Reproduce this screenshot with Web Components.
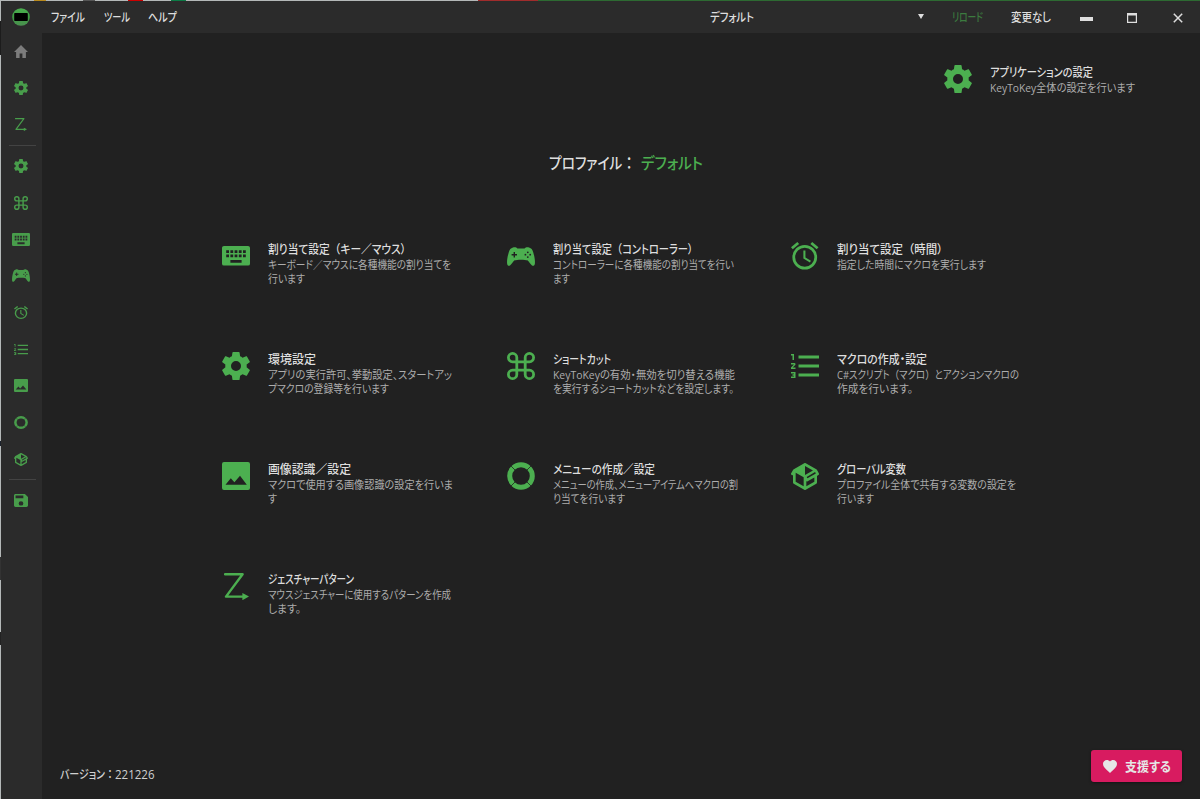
<!DOCTYPE html>
<html lang="ja">
<head>
<meta charset="utf-8">
<title>KeyToKey</title>
<style>
  html, body {
    margin: 0;
    height: 100%;
    overflow: hidden;
    background: #212121;
    color: #dedede;
    font-family: "Open Sans", "Noto Sans CJK JP", sans-serif;
    font-size: 12px;
  }
</style>
</head>
<body>
<app-window></app-window>

<script>
(function () {
  // [viewBox, svg content]
  const ICONS = {
    home: ['2 3 20 17', '<path d="M10,20V14H14V20H19V12H22L12,3L2,12H5V20H10Z"/>'],
    cog: ['2.2 2 19.6 20', '<path d="M12,15.5A3.5,3.5 0 0,1 8.5,12A3.5,3.5 0 0,1 12,8.5A3.5,3.5 0 0,1 15.5,12A3.5,3.5 0 0,1 12,15.5M19.43,12.97C19.47,12.65 19.5,12.33 19.5,12C19.5,11.67 19.47,11.34 19.43,11L21.54,9.37C21.73,9.22 21.78,8.95 21.66,8.73L19.66,5.27C19.54,5.05 19.27,4.96 19.05,5.05L16.56,6.05C16.04,5.66 15.5,5.32 14.87,5.07L14.5,2.42C14.46,2.18 14.25,2 14,2H10C9.75,2 9.54,2.18 9.5,2.42L9.13,5.07C8.5,5.32 7.96,5.66 7.44,6.05L4.95,5.05C4.73,4.96 4.46,5.05 4.34,5.27L2.34,8.73C2.21,8.95 2.27,9.22 2.46,9.37L4.57,11C4.53,11.34 4.5,11.67 4.5,12C4.5,12.33 4.53,12.65 4.57,12.97L2.46,14.63C2.27,14.78 2.21,15.05 2.34,15.27L4.34,18.73C4.46,18.95 4.73,19.03 4.95,18.95L7.44,17.94C7.96,18.34 8.5,18.68 9.13,18.93L9.5,21.58C9.54,21.82 9.75,22 10,22H14C14.25,22 14.46,21.82 14.5,21.58L14.87,18.93C15.5,18.67 16.04,18.34 16.56,17.94L19.05,18.95C19.27,19.03 19.54,18.95 19.66,18.73L21.66,15.27C21.78,15.05 21.73,14.78 21.54,14.63L19.43,12.97Z"/>'],
    gesture: ['0 0 25 27', '<path d="M1,1.2H18.6L2,23.6H20" fill="none" stroke="currentColor" stroke-width="2.4" stroke-linejoin="round" stroke-linecap="round"/><path d="M18.4,20L25,23.6L18.4,27.2Z"/>'],
    command: ['2 2 20 20', '<path d="M6,2A4,4 0 0,1 10,6V8H14V6A4,4 0 0,1 18,2A4,4 0 0,1 22,6A4,4 0 0,1 18,10H16V14H18A4,4 0 0,1 22,18A4,4 0 0,1 18,22A4,4 0 0,1 14,18V16H10V18A4,4 0 0,1 6,22A4,4 0 0,1 2,18A4,4 0 0,1 6,14H8V10H6A4,4 0 0,1 2,6A4,4 0 0,1 6,2M16,18A2,2 0 0,0 18,20A2,2 0 0,0 20,18A2,2 0 0,0 18,16H16V18M14,10H10V14H14V10M6,16A2,2 0 0,0 4,18A2,2 0 0,0 6,20A2,2 0 0,0 8,18V16H6M8,6A2,2 0 0,0 6,4A2,2 0 0,0 4,6A2,2 0 0,0 6,8H8V6M18,8A2,2 0 0,0 20,6A2,2 0 0,0 18,4A2,2 0 0,0 16,6V8H18Z"/>'],
    keyboard: ['2 5 20 14', '<path d="M19,10H17V8H19M19,13H17V11H19M16,10H14V8H16M16,13H14V11H16M16,17H8V15H16M7,10H5V8H7M7,13H5V11H7M8,11H10V13H8M8,8H10V10H8M11,11H13V13H11M11,8H13V10H11M20.6,5H3.4C2.6,5 2,5.6 2,6.4V17.6A1.4,1.4 0 0,0 3.4,19H20.6A1.4,1.4 0 0,0 22,17.6V6.4C22,5.6 21.4,5 20.6,5Z"/>'],
    controller: ['0 0 28 19', '<path fill-rule="evenodd" d="M6,0.6C7.8,0 9.6,0.5 10.4,1.6H17.6C18.4,0.5 20.2,0 22,0.6C24.4,1.3 25.4,2.6 26.2,5.2C27.4,9 28.2,13.4 27.9,16.4C27.7,18.4 26.4,19.2 25,18.4C23.3,17.4 22.3,14.6 20.4,13.3C18.4,12.4 9.6,12.4 7.6,13.3C5.7,14.6 4.7,17.4 3,18.4C1.6,19.2 0.3,18.4 0.1,16.4C-0.2,13.4 0.6,9 1.8,5.2C2.6,2.6 3.6,1.3 6,0.6M6.6,5V7H4.6V8.4H6.6V10.4H8V8.4H10V7H8V5Z"/><g fill="var(--back, #212121)"><circle cx="20.8" cy="5.3" r=".9"/><circle cx="20.8" cy="10.1" r=".9"/><circle cx="18.4" cy="7.7" r=".9"/><circle cx="23.2" cy="7.7" r=".9"/></g>'],
    alarm: ['2 1.86 20 20.14', '<path d="M12,20A7,7 0 0,1 5,13A7,7 0 0,1 12,6A7,7 0 0,1 19,13A7,7 0 0,1 12,20M12,4A9,9 0 0,0 3,13A9,9 0 0,0 12,22A9,9 0 0,0 21,13A9,9 0 0,0 12,4M12.5,8H11V14L15.75,16.85L16.5,15.62L12.5,13.25V8M7.88,3.39L6.6,1.86L2,5.71L3.29,7.24L7.88,3.39M22,5.72L17.4,1.86L16.11,3.39L20.71,7.25L22,5.72Z"/>'],
    list: ['2 4 19 16', '<path d="M7,13V11H21V13H7M7,19V17H21V19H7M7,7V5H21V7H7M3,8V5H2V4H4V8H3M2,17V16H5V20H2V19H4V18.5H3V17.5H4V17H2M4.25,10A0.75,0.75 0 0,1 5,10.75C5,10.95 4.92,11.14 4.79,11.27L3.12,13H5V14H2V13.08L4,11H2V10H4.25Z"/>'],
    image: ['0 0 28 28', '<path fill-rule="evenodd" d="M2,0H26A2,2 0 0 1 28,2V26A2,2 0 0 1 26,28H2A2,2 0 0 1 0,26V2A2,2 0 0 1 2,0M3.5,22.8H24.8L18,13.8L12.4,20.2L8.8,16.2Z"/>'],
    ring: ['0 0 28 28', '<circle cx="14" cy="14" r="11.3" fill="none" stroke="currentColor" stroke-width="5"/><path d="M4,4L9,9M24,4L19,9M4,24L9,19M24,24L19,19" stroke="var(--back, #212121)" stroke-width=".8"/>'],
    box: ['1.5 2 21 20', '<path d="M2,10.96C1.5,10.68 1.35,10.07 1.63,9.59L3.13,7C3.24,6.8 3.41,6.66 3.6,6.58L11.43,2.18C11.59,2.06 11.79,2 12,2C12.21,2 12.41,2.06 12.57,2.18L20.47,6.62C20.66,6.72 20.82,6.88 20.91,7.08L22.36,9.6C22.64,10.08 22.47,10.69 22,10.96L21,11.54V16.5C21,16.88 20.79,17.21 20.47,17.38L12.57,21.82C12.41,21.94 12.21,22 12,22C11.79,22 11.59,21.94 11.43,21.82L3.53,17.38C3.21,17.21 3,16.88 3,16.5V10.96C2.7,11.13 2.32,11.14 2,10.96M12,4.15V4.15L12,10.85V10.85L17.96,7.5L12,4.15M5,15.91L11,19.29V12.58L5,9.21V15.91M19,15.91V12.69L14,15.59C13.67,15.77 13.3,15.76 13,15.6V19.29L19,15.91M13.85,13.36L20.13,9.73L19.55,8.72L13.27,12.35L13.85,13.36Z"/>'],
    save: ['3 3 18 18', '<path d="M15,9H5V5H15M12,19A3,3 0 0,1 9,16A3,3 0 0,1 12,13A3,3 0 0,1 15,16A3,3 0 0,1 12,19M17,3H5C3.89,3 3,3.9 3,5V19A2,2 0 0,0 5,21H19A2,2 0 0,0 21,19V7L17,3Z"/>'],
    heart: ['2 3 20 18.35', '<path d="M12,21.35L10.55,20.03C5.4,15.36 2,12.27 2,8.5C2,5.41 4.42,3 7.5,3C9.24,3 10.91,3.81 12,5.08C13.09,3.81 14.76,3 16.5,3C19.58,3 22,5.41 22,8.5C22,12.27 18.6,15.36 13.45,20.03L12,21.35Z"/>'],
    down: ['0 0 6 6', '<path d="M0,0H6L3,6Z"/>'],
    minimize: ['0 0 13 4', '<path d="M0,0H13V4H0Z"/>'],
    maximize: ['0 0 10 10', '<path fill-rule="evenodd" d="M0,0H10V10H0ZM1.2,2.6V8.8H8.8V2.6Z"/>'],
    close: ['0 0 10 10', '<path d="M0.8,0.8L9.2,9.2M9.2,0.8L0.8,9.2" fill="none" stroke="currentColor" stroke-width="1.5"/>'],
    logo: ['0 0 18 18', '<defs><linearGradient id="g" x2="0" y2="1"><stop offset="0" stop-color="#4caf50"/><stop offset=".5" stop-color="#3f9d44"/><stop offset="1" stop-color="#4b8f50"/></linearGradient></defs><circle cx="9" cy="9" r="8.8" fill="url(#g)"/><rect x="2.2" y="5" width="13.6" height="8" rx=".8" fill="#000"/>']
  }

  customElements.define('ui-icon', class extends HTMLElement {
    constructor() {
      super()
      this.shadow = this.attachShadow({ mode: 'open' })
    }

    connectedCallback() {
      const [box, content] = ICONS[this.getAttribute('name')]
      const w = this.getAttribute('w')
      const h = this.getAttribute('h')
      this.shadow.innerHTML = `
        <style>
          :host { display: inline-block; flex: none; line-height: 0; }
          svg { display: block; fill: currentColor; }
        </style>
        <svg width="${w}" height="${h}" viewBox="${box}" preserveAspectRatio="none">${content}</svg>`
    }
  })

  // One line of text, condensed to the given width.
  customElements.define('ui-line', class extends HTMLElement {
    constructor() {
      super()
      this.shadow = this.attachShadow({ mode: 'open' })
      this.shadow.innerHTML = `
        <style>
          :host { display: block; flex: none; white-space: nowrap; font-feature-settings: "palt"; }
          span { display: inline-block; transform-origin: 0 50%; }
          ::slotted(.wide) { font-feature-settings: normal; }
        </style>
        <span><slot></slot></span>`
    }

    connectedCallback() {
      const width = Number(this.getAttribute('w'))
      const span = this.shadow.querySelector('span')
      const natural = span.getBoundingClientRect().width
      this.style.width = `${width}px`
      if (natural) span.style.transform = `scaleX(${width / natural})`
    }
  })

  // Brackets and colons inside a line keep their full width.
  function wide(text) {
    return text.replace(/[（：]|）(?=.)/g, '<span class="wide">$&</span>')
  }

  customElements.define('title-bar', class extends HTMLElement {
    constructor() {
      super()
      this.shadow = this.attachShadow({ mode: 'open' })
      this.shadow.innerHTML = `
        <style>
          :host { display: flex; align-items: center; height: 32px; background: #2b2b2b; line-height: 16px; font-weight: 500; }
          .logo { margin: 0 21px 0 11px; }
          ui-line { padding-top: 1px; }
          .menu { display: flex; gap: 18.5px; flex: 0 0 659px; }
          .profile { flex: 0 0 208px; }
          .down { flex: 0 0 33.5px; margin-top: -1px; }
          .reload { color: #3c7b3f; flex: 0 0 59.5px; }
          .state { flex: 0 0 69px; }
          .min { flex: 0 0 47px; padding-top: 1px; }
          .max { flex: 0 0 46px; padding-top: 1px; }
          .close { padding-top: 1px; }
          .min, .max, .down { display: flex; }
        </style>
        <ui-icon class="logo" name="logo" w="18" h="18"></ui-icon>
        <div class="menu">
          <ui-line w="34">ファイル</ui-line>
          <ui-line w="26">ツール</ui-line>
          <ui-line w="29">ヘルプ</ui-line>
        </div>
        <div class="profile"><ui-line w="44">デフォルト</ui-line></div>
        <div class="down"><ui-icon name="down" w="6" h="5"></ui-icon></div>
        <div class="reload"><ui-line w="31">リロード</ui-line></div>
        <div class="state"><ui-line w="40">変更なし</ui-line></div>
        <div class="min"><ui-icon style="padding-top: 3px" name="minimize" w="13" h="4"></ui-icon></div>
        <div class="max"><ui-icon name="maximize" w="10" h="10"></ui-icon></div>
        <ui-icon class="close" name="close" w="10" h="10"></ui-icon>`
    }
  })

  const TOOLS = [
    ['home', 14, 13], ['cog', 14, 14], ['gesture', 12, 13], null,
    ['cog', 14, 14], ['command', 14, 14], ['keyboard', 18, 13], ['controller', 18, 13],
    ['alarm', 14, 13], ['list', 14, 11], ['image', 14, 13], ['ring', 14, 13], ['box', 14, 13], null,
    ['save', 14, 13]
  ]

  customElements.define('side-bar', class extends HTMLElement {
    constructor() {
      super()
      this.shadow = this.attachShadow({ mode: 'open' })
      this.shadow.innerHTML = `
        <style>
          :host { display: block; padding-top: .4px; background: #2b2b2b; color: #489d4b; --back: #2b2b2b; }
          .item { display: flex; align-items: center; justify-content: center; height: 36.65px; padding-right: 1px; }
          .item.home { color: #7c7c7c; }
          .line { height: 1px; margin: 2px 6px 1.4px 8px; background: #434343; }
        </style>
        ${TOOLS.map(t => t
          ? `<div class="item ${t[0]}"><ui-icon name="${t[0]}" w="${t[1]}" h="${t[2]}"></ui-icon></div>`
          : '<div class="line"></div>').join('')}`
    }
  })

  customElements.define('menu-card', class extends HTMLElement {
    constructor() {
      super()
      this.shadow = this.attachShadow({ mode: 'open' })
    }

    set data(data) {
      const { icon, size, title, lines } = data
      this.shadow.innerHTML = `
        <style>
          :host { display: flex; align-items: flex-start; }
          .icon { display: flex; align-items: center; justify-content: center; flex: 0 0 28px; height: 28px; margin-right: 18px; color: #4caf50; }
          .title { line-height: 15px; margin-bottom: .7px; font-weight: 500; }
          .text { color: #adadad; font-size: 11px; line-height: 14.7px; }
        </style>
        <div class="icon"><ui-icon name="${icon}" w="${size[0]}" h="${size[1]}"></ui-icon></div>
        <div>
          <ui-line class="title" w="${title[1]}">${wide(title[0])}</ui-line>
          ${lines.map(l => `<ui-line class="text" w="${l[1]}">${wide(l[0])}</ui-line>`).join('')}
        </div>`
    }
  })

  const APP = { icon: 'cog', size: [28, 28], title: ['アプリケーションの設定', 103], lines: [['KeyToKey全体の設定を行います', 145]] }

  const CARDS = [
    { icon: 'keyboard', size: [28, 19.6], title: ['割り当て設定（キー／マウス）', 138], lines: [['キーボード／マウスに各種機能の割り当てを', 183], ['行います', 37]] },
    { icon: 'controller', size: [28, 19], title: ['割り当て設定（コントローラー）', 140], lines: [['コントローラーに各種機能の割り当てを行い', 181], ['ます', 17]] },
    { icon: 'alarm', size: [27.5, 27.5], title: ['割り当て設定（時間）', 106], lines: [['指定した時間にマクロを実行します', 149]] },
    { icon: 'cog', size: [28, 28], title: ['環境設定', 48], lines: [['アプリの実行許可、挙動設定、スタートアッ', 184], ['プマクロの登録等を行います', 121]] },
    { icon: 'command', size: [28, 28], title: ['ショートカット', 58], lines: [['KeyToKeyの有効・無効を切り替える機能', 182], ['を実行するショートカットなどを設定します。', 181]] },
    { icon: 'list', size: [28.5, 24], title: ['マクロの作成・設定', 90], lines: [['C#スクリプト（マクロ）とアクションマクロの', 182], ['作成を行います。', 76]] },
    { icon: 'image', size: [28, 28], title: ['画像認識／設定', 83], lines: [['マクロで使用する画像認識の設定を行いま', 185], ['す', 9]] },
    { icon: 'ring', size: [28, 28], title: ['メニューの作成／設定', 102], lines: [['メニューの作成、メニューアイテムへマクロの割', 185], ['り当てを行います', 72]] },
    { icon: 'box', size: [28, 27], title: ['グローバル変数', 69], lines: [['プロファイル全体で共有する変数の設定を', 179], ['行います', 37]] },
    { icon: 'gesture', size: [25, 27], title: ['ジェスチャーパターン', 86], lines: [['マウスジェスチャーに使用するパターンを作成', 183], ['します。', 33]] }
  ]

  customElements.define('home-page', class extends HTMLElement {
    constructor() {
      super()
      this.shadow = this.attachShadow({ mode: 'open' })
      this.shadow.innerHTML = `
        <style>
          :host { display: flex; flex-direction: column; background: #212121; }
          .app { display: flex; justify-content: flex-end; padding: 32px 65px 0 0; height: 85px; box-sizing: border-box; }
          .profile { display: flex; justify-content: center; padding-top: 33px; height: 124px; box-sizing: border-box; font-size: 16px; font-weight: 500; line-height: 24px; gap: 5px; margin-left: 9px; }
          .profile .name { color: #4caf50; }
          .cards { display: grid; grid-template-columns: repeat(3, 284.2px); grid-auto-rows: 110px; margin-left: 180.4px; }
          footer { display: flex; align-items: flex-end; justify-content: space-between; margin-top: auto; padding: 0 18px 17px; }
          .version { display: flex; margin-bottom: -1px; line-height: 16px; font-weight: 500; color: #d0d0d0; }
        </style>
        <div class="app"></div>
        <div class="profile">
          <ui-line w="87">${wide('プロファイル：')}</ui-line>
          <ui-line class="name" w="62">デフォルト</ui-line>
        </div>
        <div class="cards"></div>
        <footer>
          <div class="version"><ui-line w="55">${wide('バージョン：')}</ui-line><ui-line w="39.5">221226</ui-line></div>
          <support-button>支援する</support-button>
        </footer>`
      this.addCard('.app', APP)
      CARDS.forEach(card => this.addCard('.cards', card))
    }

    addCard(selector, data) {
      const card = document.createElement('menu-card')
      card.data = data
      this.shadow.querySelector(selector).appendChild(card)
    }
  })

  customElements.define('support-button', class extends HTMLElement {
    constructor() {
      super()
      this.shadow = this.attachShadow({ mode: 'open' })
      this.shadow.innerHTML = `
        <style>
          :host {
            display: flex; align-items: center; box-sizing: border-box;
            width: 91.5px; height: 32px; padding-left: 12px; border-radius: 3px;
            background: #d81b60; color: #e6e6e6;
            font-size: 13px; font-weight: 600; line-height: 18px;
            box-shadow: 0 1px 3px rgba(0, 0, 0, .4);
          }
          ui-icon { margin-right: 8.5px; }
        </style>
        <ui-icon name="heart" w="14" h="13"></ui-icon>
        <ui-line w="46"><slot></slot></ui-line>`
    }
  })

  customElements.define('app-window', class extends HTMLElement {
    constructor() {
      super()
      this.shadow = this.attachShadow({ mode: 'open' })
      this.shadow.innerHTML = `
        <style>
          /* the one pixel frame shows what is behind the window */
          :host {
            display: grid; grid-template: 32px 1fr / 41px 1fr; box-sizing: border-box;
            width: 1200px; height: 799px; padding: 1px 0 0 1px;
            background:
              linear-gradient(90deg, #b4b8b8 34px, #b98a1c 34px 46px, #b4b8b8 46px 83px, #555 83px 95px, #b4b8b8 95px 128px, #c00 128px 143px, #b4b8b8 143px 171px, #0b7a45 171px 186px, #b4b8b8 186px 478px, #a02c2c 478px 538px, #2d6a32 538px) 0 0 / 100% 1px no-repeat,
              linear-gradient(#b4b8b8 21px, #1c1c1c 21px 55px, #b4b8b8 55px 441px, #1c222c 441px 446px, #b4b8b8 446px 557px, #333 557px 580px, #b4b8b8 580px 632px, #222 632px 645px, #b4b8b8 645px) 0 0 / 1px 100% no-repeat;
          }
          title-bar { grid-column: 1 / 3; }
        </style>
        <title-bar></title-bar>
        <side-bar></side-bar>
        <home-page></home-page>`
    }
  })
})();
</script>
</body>
</html>
